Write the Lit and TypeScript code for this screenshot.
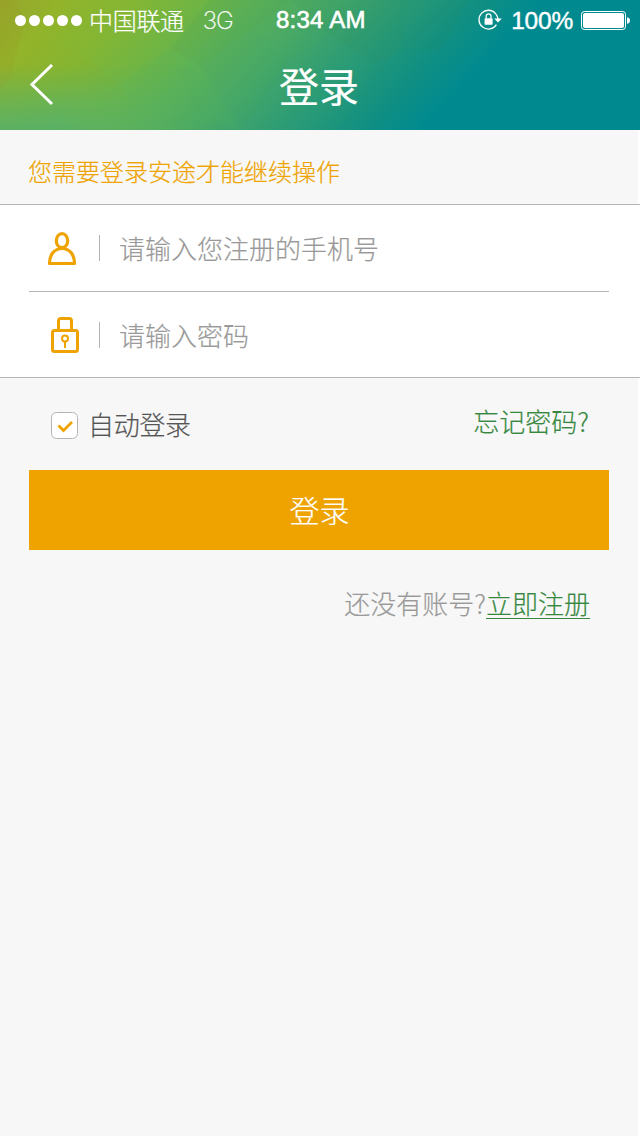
import { LitElement, html, css, svg } from "lit";
import { customElement, property } from "lit/decorators.js";

const SANS = css`"Noto Sans CJK SC", sans-serif`;

@customElement("status-bar")
class StatusBar extends LitElement {
  static styles = css`
    :host { display: block; }
    .bar { display: grid; grid-template-columns: 276px 1fr auto; align-items: center; height: 40px; color: #fff; padding: 0 10px 0 0; }
    .left { display: flex; align-items: center; padding-left: 15px; }
    .dots { display: flex; gap: 3px; margin-right: 7px; }
    .dot { width: 11px; height: 11px; border-radius: 50%; background: #fff; }
    .carrier { font: 300 24px/36px ${SANS}; letter-spacing: -0.3px; }
    .net { font: 200 24px/36px "Inter", sans-serif; margin: 2px 0 0 19px; letter-spacing: -1px; -webkit-text-stroke: 0.2px #fff; }
    .time { font: 500 24px/36px "Liberation Sans", sans-serif; -webkit-text-stroke: 0.6px #fff; letter-spacing: 0.25px; }
    .right { display: flex; align-items: center; }
    .pct { font: 24.5px/36px "Liberation Sans", sans-serif; -webkit-text-stroke: 0.4px #fff; letter-spacing: -0.2px; margin: 1px 8px 0 9px; }
    svg { display: block; }
  `;
  render() {
    return html`
      <div class="bar">
        <div class="left">
          <div class="dots">${[0, 1, 2, 3, 4].map(() => html`<i class="dot"></i>`)}</div>
          <span class="carrier">中国联通</span>
          <span class="net">3G</span>
        </div>
        <span class="time">8:34 AM</span>
        <div class="right">
          <svg width="24" height="22" viewBox="0 0 24 22">
            <path d="M17.6 4.6A9.4 9.4 0 1 0 18.400 15.600M17.600 4.600A9.400 9.400 0 0 1 20 10" fill="none" stroke="#fff" stroke-width="1.3" />
            <path d="M16.200 9.500h7.600L20 13.600z" fill="#fff" />
            <rect x="6.600" y="9.200" width="8" height="6.600" rx=".7" fill="#fff" />
            <path d="M8.200 9.600V7.200a2.400 2.400 0 0 1 4.800 0v2.400" fill="none" stroke="#fff" stroke-width="1.3" />
          </svg>
          <span class="pct">100%</span>
          <svg width="49" height="19" viewBox="0 0 49 19">
            <rect x=".5" y=".5" width="44" height="18" rx="2.800" fill="none" stroke="#fff" />
            <rect x="2" y="2" width="41" height="15" rx="2" fill="#fff" />
            <path d="M46 6.200c1.800.3 3 1.600 3 3.300s-1.200 3-3 3.300z" fill="#fff" />
          </svg>
        </div>
      </div>
    `;
  }
}

@customElement("nav-header")
class NavHeader extends LitElement {
  static styles = css`
    :host { display: block; }
    .header { display: grid; height: 130px; overflow: hidden; }
    .art, .content { grid-area: 1 / 1; }
    .art { display: block; }
    .content { display: flex; flex-direction: column; z-index: 1; }
    .nav { display: grid; grid-template-columns: 100px 1fr 100px; align-items: center; height: 90px; }
    .back { display: block; margin-left: 29px; }
    .title { font: 400 40px/60px ${SANS}; color: #fff; text-align: center; margin-right: 2px; }
  `;
  render() {
    const facets = [
      ["0,0 14,0 25,20 10,80 0,90", "#a08c20", 0.12],
      ["45,0 62,0 75,50 33,40", "#8cc020", 0.06],
      ["33,40 75,50 120,84 60,100 10,80", "#9cb81c", 0.08],
      ["75,0 62,0 75,50 120,84 171,48 210,0", "#86bc2c", 0.06],
      ["171,48 120,84 132,108 240,130 205,70", "#5cc060", 0.09],
      ["210,0 171,48 200,66 255,26 290,0", "#4a9c50", 0.1],
      ["255,26 200,66 240,130 285,62", "#40b070", 0.07],
      ["285,62 330,35 375,65 340,130 240,130", "#38a880", 0.05],
      ["330,35 290,0 400,0 403,49 375,65", "#388c58", 0.09],
      ["400,0 470,0 440,50 403,49", "#208c60", 0.08],
    ];
    return html`
      <header class="header">
        <svg class="art" width="640" height="130" viewBox="0 0 640 130">
          <defs>
            <linearGradient id="g" gradientUnits="userSpaceOnUse" x1="0" y1="0" x2="292" y2="270">
              <stop offset="0" stop-color="#98a62b" />
              <stop offset=".12" stop-color="#93b42b" />
              <stop offset=".25" stop-color="#84b634" />
              <stop offset=".37" stop-color="#6fb546" />
              <stop offset=".48" stop-color="#5ab058" />
              <stop offset=".6" stop-color="#47a866" />
              <stop offset=".74" stop-color="#2c9b74" />
              <stop offset=".88" stop-color="#129081" />
              <stop offset="1" stop-color="#008a90" />
            </linearGradient>
            <linearGradient id="v" x1="0" y1="0" x2="0" y2="1">
              <stop offset=".5" stop-color="#56b06a" stop-opacity="0" />
              <stop offset="1" stop-color="#56b06a" stop-opacity=".9" />
            </linearGradient>
            <linearGradient id="m" x1="0" y1="0" x2="1" y2="0">
              <stop offset=".3" stop-color="#fff" />
              <stop offset="1" stop-color="#000" />
            </linearGradient>
            <mask id="fade"><rect width="200" height="130" fill="url(#m)" /></mask>
          </defs>
          <rect width="640" height="130" fill="url(#g)" />
          ${facets.map(([p, c, o]) => svg`<polygon points=${p} fill=${c} fill-opacity=${o} />`)}
          <rect width="200" height="130" fill="url(#v)" mask="url(#fade)" />
        </svg>
        <div class="content">
          <status-bar></status-bar>
          <div class="nav">
            <svg class="back" width="26" height="42" viewBox="0 0 26 42">
              <path d="M23 1L3 20.500L23 40" fill="none" stroke="#fff" stroke-width="3" />
            </svg>
            <span class="title">登录</span>
          </div>
        </div>
      </header>
    `;
  }
}

@customElement("field-row")
class FieldRow extends LitElement {
  @property() label = "";
  static styles = css`
    :host { display: block; height: 86px; }
    .row { display: flex; align-items: center; height: 100%; padding-left: 47px; }
    .icon { display: flex; width: 52px; }
    .rule { width: 1px; height: 26px; background: #b4b4b4; margin-right: 19px; }
    .label { font: 300 26px/40px ${SANS}; color: #999; -webkit-text-stroke: 0.2px #999; }
  `;
  render() {
    return html`
      <div class="row">
        <span class="icon"><slot></slot></span>
        <span class="rule"></span>
        <span class="label">${this.label}</span>
      </div>
    `;
  }
}

@customElement("app-root")
class AppRoot extends LitElement {
  static styles = css`
    :host { display: block; }
    .page { width: 640px; height: 1136px; overflow: hidden; background: linear-gradient(90deg, #f7f7f7 638px, #fff 638px); font: 300 26px/40px ${SANS}; -webkit-text-stroke-width: 0.2px; }
    .hint { height: 74px; padding: 21px 0 0 28px; box-sizing: border-box; font-size: 24px; color: #eea300; }
    .fields { background: #fff; border-top: 1px solid #b4b4b4; border-bottom: 1px solid #b4b4b4; }
    .split { height: 1px; margin: 0 31px 0 29px; background: #b4b4b4; }
    .fields svg { display: block; }
    .password { height: 85px; }
    .user { margin-top: 1px; }
    .lock { margin: 1px 0 0 4px; }
    .options { display: flex; align-items: flex-start; height: 92px; padding: 0 51px; box-sizing: border-box; }
    .check { display: block; margin: 34px 10px 0 0; }
    .auto { color: #555; margin-top: 26px; letter-spacing: -0.3px; }
    .forgot { color: #36883f; margin: 23px 0 0 auto; }
    .submit { display: flex; align-items: center; justify-content: center; height: 80px; margin: 0 31px 0 29px; padding: 0 0 2px 1px; box-sizing: border-box; background: #eea300; color: #fff; font-size: 30px; }
    .signup { display: flex; justify-content: flex-end; padding: 33px 50px 0 0; color: #999; }
    .link { color: #36883f; height: 35px; border-bottom: 1px solid #36883f; }
  `;
  render() {
    return html`
      <div class="page">
        <nav-header></nav-header>
        <div class="hint">您需要登录安途才能继续操作</div>
        <div class="fields">
          <field-row label="请输入您注册的手机号">
            <svg class="user" width="30" height="34" viewBox="0 0 30 34">
              <g fill="none" stroke="#eea300" stroke-width="3.200">
                <ellipse cx="15" cy="8.700" rx="5.700" ry="7" />
                <path d="M2.500 31.500C2.500 22.500 7.500 16.500 15 16.500S27.500 22.500 27.500 31.500Z" stroke-linejoin="round" />
              </g>
            </svg>
          </field-row>
          <div class="split"></div>
          <field-row class="password" label="请输入密码">
            <svg class="lock" width="28" height="36" viewBox="0 0 28 36">
              <g fill="none" stroke="#eea300">
                <rect x="1.500" y="13.500" width="25" height="21" rx="2" stroke-width="3" />
                <path d="M7.500 13V4q0-2.500 2.500-2.500h8q2.500 0 2.500 2.500v9" stroke-width="3" />
                <circle cx="14" cy="21.500" r="3" stroke-width="2" />
                <path d="M14 24.500V31" stroke-width="2" />
              </g>
            </svg>
          </field-row>
        </div>
        <div class="options">
          <svg class="check" width="27" height="27" viewBox="0 0 27 27">
            <rect x=".5" y=".5" width="26" height="26" rx="5" fill="#fff" stroke="#b4b4b4" />
            <path d="M7.500 13.500L12.500 18.500L21 10" fill="none" stroke="#eea300" stroke-width="2.800" />
          </svg>
          <span class="auto">自动登录</span>
          <span class="forgot">忘记密码?</span>
        </div>
        <div class="submit">登录</div>
        <div class="signup"><span>还没有账号?</span><span class="link">立即注册</span></div>
      </div>
    `;
  }
}
